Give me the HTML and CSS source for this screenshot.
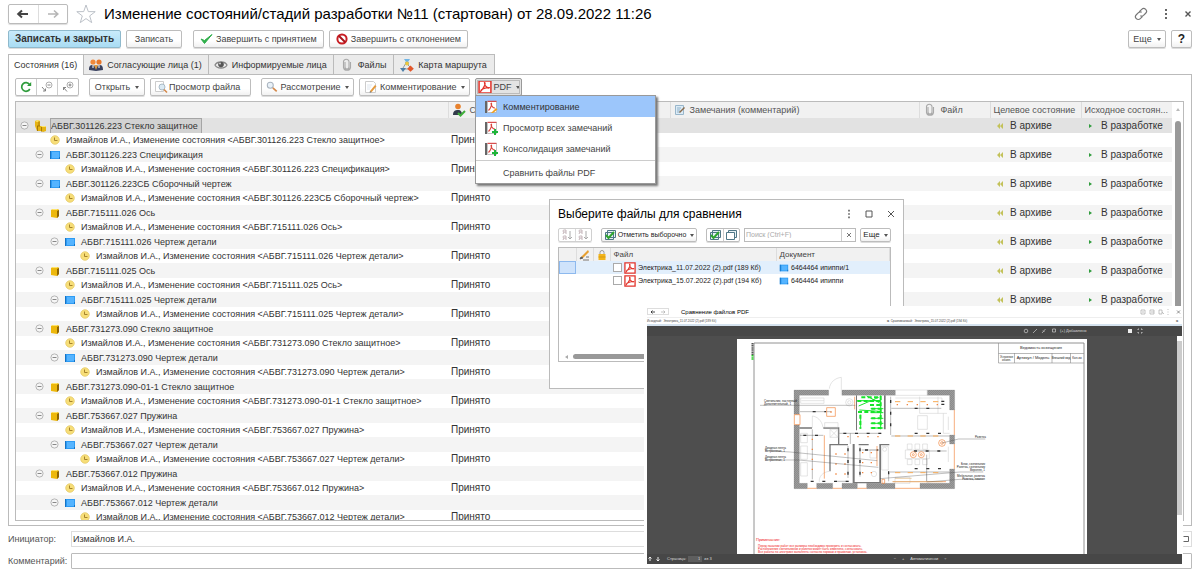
FILE: index.html
```html
<!DOCTYPE html>
<html lang="ru">
<head>
<meta charset="utf-8">
<title>Изменение состояний/стадий разработки №11</title>
<link rel="stylesheet" href="styles.css">
</head>
<body>
<svg class="defs" aria-hidden="true">
  <symbol id="minus" viewBox="0 0 9 9"><circle cx="4.500" cy="4.500" r="3.600" fill="#f6f6f6" stroke="#a6a6a6" stroke-width=".8"/><path d="M2.500 4.500h4" stroke="#888"/></symbol>
  <symbol id="asm" viewBox="0 0 12 12"><path d="M1 1l3-1 2 1v5h5l1 1v4l-3 1-2-1H3l-2-5z" fill="#e6b414"/><path d="M1 1l3-1 2 1-3 1zM7 6h4l1 1H8z" fill="#ffe76a"/><path d="M5 1.500V6M3 6h3M7.500 7v4.500M3.500 6v5" stroke="#9a6c00" stroke-width=".8"/></symbol>
  <symbol id="part" viewBox="0 0 12 12"><path d="M2 3l2-1h5l1 1v6l-2 2-6-1z" fill="#edb80c"/><path d="M2 3l2-1h5l-1 1z" fill="#ffe46a"/><path d="M8 4l2-1v6l-2 2z" fill="#8f6500"/></symbol>
  <symbol id="doc" viewBox="0 0 12 12"><path d="M1 2h10v8H1z" fill="#2e9bf3"/><path d="M3 3h7v6H3z" fill="#55b4ff"/><path d="M1 2h1v8H1zM10 8h1v2h-1z" fill="#1673c4"/></symbol>
  <symbol id="clock" viewBox="0 0 12 12"><circle cx="6" cy="6" r="4.300" fill="#f7de78" stroke="#e3c65e" stroke-width=".7"/><path d="M5.500 3.500v3h3" fill="none" stroke="#a5832c"/></symbol>
  <symbol id="back" viewBox="0 0 8 8"><path d="M4 1v6L1 4zM7 1v6L4 4z" fill="#c3c25a"/></symbol>
  <symbol id="fwd" viewBox="0 0 8 8"><path d="M2 2l3 2-3 2z" fill="#2f9c3c"/></symbol>
  <symbol id="clip" viewBox="0 0 14 14"><path d="M5 4v5a2 2 0 0 0 4 0V3.500a2.800 2.800 0 0 0-5.500 0V9.500a3.600 3.600 0 0 0 7 0V4" fill="none" stroke="#a9a9a9" stroke-width="1.100"/></symbol>
  <symbol id="note" viewBox="0 0 14 14"><path d="M1.500 1.500h8l2 2v9h-10z" fill="#fff" stroke="#ccc"/><path d="M3 5h5M3 7h4M3 9h3" stroke="#dfe6ee"/><path d="M6 11l5-6 1.500 1.200-5 6z" fill="#e59a3c"/><path d="M6 11l-.4 1.600 1.900-.4z" fill="#555"/></symbol>
  <symbol id="bluenote" viewBox="0 0 12 12"><path d="M1.500 1.500h8v9h-8z" fill="#dcebf6" stroke="#98b6cb"/><path d="M3 4h4M3 6h3M3 8h3" stroke="#8fb1c8"/><path d="M5 8l5-5 1 1-5 5z" fill="#8a6a4a"/></symbol>
  <symbol id="pdf" viewBox="0 0 13 13"><path d="M1 1h11v11H1z" fill="#fff" stroke="#e2352c" stroke-width="1.400"/><path d="M6 2.500c1.500 0 0 4-3.500 8 0-2 4-3.500 8-3.500 0 1.500-5-1-4.500-4.500z" fill="none" stroke="#e2352c" stroke-width="1.200"/></symbol>
  <symbol id="pdfpage" viewBox="0 0 14 14"><path d="M1 1h2v12H1z" fill="#666"/><path d="M3.500 1.500h9v11h-9z" fill="#fff" stroke="#aaa" stroke-width=".7"/><path d="M3.500 1.300h9" stroke="#d33"/><path d="M7 3c1.500 0 0 5-2.500 7.500M7 3c0 3 2 5 4 5" fill="none" stroke="#d9423a" stroke-width="1.100"/></symbol>
  <symbol id="checks" viewBox="0 0 12 12"><path d="M3.500 1.500h8v7h-8zM1.500 3.500h8v7h-8z" fill="#e8f2f6" stroke="#4f7787"/><path d="M2 6l2.500 3L10 3" fill="none" stroke="#2fa52f" stroke-width="2"/></symbol>
  <symbol id="sheets" viewBox="0 0 12 12"><path d="M3.500 1.500h8v7h-8z" fill="#e8f2f6" stroke="#4f7787"/><path d="M1.500 3.500h8v7h-8z" fill="#fff" stroke="#4f7787"/></symbol>
  <symbol id="lens" viewBox="0 0 14 14"><circle cx="5" cy="5" r="3.500" fill="#e9f1f8" stroke="#aab4bf" stroke-width="1.200"/><path d="M8 8l4.500 4" stroke="#d4884a" stroke-width="2"/></symbol>
  <symbol id="dots" viewBox="0 0 4 12"><path d="M1 1h2v2H1zM1 5h2v2H1zM1 9h2v2H1z" fill="#666"/></symbol>
  <symbol id="sort" viewBox="0 0 12 12"><path d="M9 2v8M7 8l2 2 2-2" fill="none" stroke="#888"/><path d="M5 1v4M5 1H3a1 1 0 0 0 0 2h2M3 3L2 5M5 7v4M5 7H3a1 1 0 0 0 0 2h2M3 9l-1 2" fill="none" stroke="#a58c94" stroke-width=".9"/></symbol>
</svg>

<header class="title-bar">
  <div class="nav">
    <button type="button" aria-label="Назад"><svg width="14" height="10" viewBox="0 0 14 10"><path d="M2 5h10M6 1.500L2.200 5 6 8.500" fill="none" stroke="#444" stroke-width="2"/></svg></button>
    <button type="button" aria-label="Вперед"><svg width="14" height="10" viewBox="0 0 14 10"><path d="M2 5h9M8 1.500L11.800 5 8 8.500" fill="none" stroke="#b5b5b5" stroke-width="1.600"/></svg></button>
  </div>
  <svg class="star" viewBox="0 0 20 20"><path d="M10 1l2.300 6.600 6.900.1-5.500 4.200 2 6.700-5.700-4-5.700 4 2-6.700L.8 7.700l6.900-.1z" fill="#fff" stroke="#b4bac2" stroke-width=".9"/></svg>
  <h1>Изменение состояний/стадий разработки №11 (стартован) от 28.09.2022 11:26</h1>
  <div class="win-tools">
    <svg width="14" height="14" viewBox="0 0 14 14"><g transform="rotate(-45 7 7)" fill="none" stroke="#777" stroke-width="1.200"><path d="M6.500 9.800H3.200a2.800 2.800 0 0 1 0-5.600h3a2.800 2.800 0 0 1 2.600 2M7.500 4.200h3.300a2.800 2.800 0 0 1 0 5.600h-3a2.800 2.800 0 0 1-2.600-2"/></g></svg>
    <svg width="4" height="12"><use href="#dots"/></svg>
    <svg width="8" height="8" viewBox="0 0 8 8"><path d="M1.500 1.500l5 5M6.500 1.500l-5 5" stroke="#555" stroke-width="1.400"/></svg>
  </div>
</header>

<div class="commands">
  <button type="button" class="btn primary">Записать и закрыть</button>
  <button type="button" class="btn save">Записать</button>
  <button type="button" class="btn"><svg width="13" height="12" viewBox="0 0 13 12"><path d="M1 6l3.500 4.500L12 1.500 4.500 7.500z" fill="#2fae4a" stroke="#2fae4a"/></svg>Завершить с принятием</button>
  <button type="button" class="btn"><svg width="12" height="12" viewBox="0 0 12 12"><circle cx="6" cy="6" r="4.600" fill="#fff" stroke="#c81e24" stroke-width="2"/><path d="M3 3l6 6" stroke="#a8141a" stroke-width="2"/></svg>Завершить с отклонением</button>
  <span class="grow"></span>
  <button type="button" class="btn more">Еще<i class="caret"></i></button>
  <button type="button" class="btn help">?</button>
</div>

<nav class="tabs">
  <button type="button" class="tab active">Состояния (16)</button>
  <button type="button" class="tab"><svg width="14" height="14" viewBox="0 0 14 14"><circle cx="4" cy="4" r="2.600" fill="#f0883a"/><circle cx="10" cy="4" r="2.600" fill="#e8772a"/><path d="M0 12c0-4 1-5 4-5l3 2 3-2c3 0 4 1 4 5l-7 1z" fill="#39405e"/><path d="M5 7l2 5 2-5z" fill="#d94"/><path d="M4 7v3M10 7v3" stroke="#fff"/></svg>Согласующие лица (1)</button>
  <button type="button" class="tab"><svg width="14" height="14" viewBox="0 0 14 14"><path d="M1 7c2-4 10-4 12 0-2 4-10 4-12 0z" fill="#eee" stroke="#888" stroke-width="1.300"/><circle cx="7" cy="6.500" r="2.800" fill="#555"/><circle cx="6" cy="5.500" r=".9" fill="#ddd"/></svg>Информируемые лица</button>
  <button type="button" class="tab roomy"><svg width="14" height="14"><use href="#clip"/></svg>Файлы</button>
  <button type="button" class="tab roomy"><svg width="14" height="14" viewBox="0 0 14 14"><path d="M6 5L3 10M7 6l4 4M4 11h6" stroke="#999" fill="none"/><path d="M4 1h6L8 4h1v3H5V4h1z" fill="#6fb5e6"/><circle cx="7" cy="5.500" r="1.900" fill="#f0c63c"/><path d="M0 10h6l-3 4z" fill="#4f7fa8"/><path d="M10.500 7.500l3.300 3.300-3.300 3-3.300-3z" fill="#e2572b"/></svg>Карта маршрута</button>
</nav>

<main class="panel">
  <div class="toolbar">
    <div class="group">
      <button type="button" aria-label="Обновить"><svg width="12" height="12" viewBox="0 0 12 12"><path d="M9.800 8A4.300 4.300 0 1 1 9.500 3.500" fill="none" stroke="#2f9c3c" stroke-width="1.700"/><path d="M11.200 1v4H7z" fill="#2f9c3c"/></svg></button>
      <button type="button" aria-label="Свернуть"><svg width="12" height="12" viewBox="0 0 12 12"><circle cx="8" cy="4" r="3" fill="none" stroke="#999" stroke-width=".8"/><path d="M6.500 4h3M1 6l3.500 4M4.500 7.500V10H2" fill="none" stroke="#777" stroke-width=".9"/></svg></button>
      <button type="button" aria-label="Развернуть"><svg width="12" height="12" viewBox="0 0 12 12"><circle cx="8" cy="4" r="3" fill="none" stroke="#999" stroke-width=".8"/><path d="M6.500 4h3M8 2.500v3M1.500 6.500L5 10.500M1.500 9V6.500H4" fill="none" stroke="#777" stroke-width=".9"/></svg></button>
    </div>
    <button type="button" class="btn open">Открыть<i class="caret"></i></button>
    <button type="button" class="btn view"><svg width="14" height="14" viewBox="0 0 14 14"><path d="M1.500 1.500h8v10h-8z" fill="#fff" stroke="#ccc"/><circle cx="8" cy="7" r="3" fill="#dbeaf4" stroke="#a9bac6"/><path d="M10 9.500l3 3" stroke="#d4884a" stroke-width="1.600"/></svg>Просмотр файла</button>
    <button type="button" class="btn review"><svg width="12" height="12"><use href="#lens"/></svg>Рассмотрение<i class="caret"></i></button>
    <button type="button" class="btn comment"><svg width="14" height="14"><use href="#note"/></svg>Комментирование<i class="caret"></i></button>
    <div class="drop">
      <button type="button" class="btn pressed"><svg width="14" height="14"><use href="#pdf"/></svg>PDF<i class="caret"></i></button>
      <div class="menu">
        <button type="button" class="item on"><svg width="14" height="14" viewBox="0 0 14 14"><use href="#pdfpage"/><path d="M7 13l5-5 1.500 1.500L9 13z" fill="#f0a020"/></svg>Комментирование</button>
        <button type="button" class="item"><svg width="14" height="14" viewBox="0 0 14 14"><use href="#pdfpage"/><path d="M11 8v6M8 11h6" stroke="#1eb53a" stroke-width="2"/></svg>Просмотр всех замечаний</button>
        <button type="button" class="item"><svg width="14" height="14" viewBox="0 0 14 14"><use href="#pdfpage"/><path d="M11 8v6M8 11h6" stroke="#1eb53a" stroke-width="2"/></svg>Консолидация замечаний</button>
        <hr>
        <button type="button" class="item bare">Сравнить файлы PDF</button>
      </div>
    </div>
  </div>

  <div class="grid-box">
    <div class="grid-scroll">
      <table class="grid">
        <colgroup><col class="c-name"><col class="c-state"><col><col class="c-file"><col class="c-goal"><col class="c-from"></colgroup>
        <thead><tr>
          <th></th>
          <th><span class="head"><svg width="14" height="14" viewBox="0 0 14 14"><circle cx="6" cy="3.500" r="2.800" fill="#e8822e"/><path d="M1 12c0-4 2-5 5-5s4 2 4 5z" fill="#333c4c"/><path d="M6 10l2.500 2.500L13 8" fill="none" stroke="#3fae3a" stroke-width="2"/></svg>Состояние</span></th>
          <th><span class="head"><svg width="12" height="12"><use href="#bluenote"/></svg>Замечания (комментарий)</span></th>
          <th><span class="head"><svg width="14" height="14"><use href="#clip"/></svg>Файл</span></th>
          <th>Целевое состояние</th>
          <th>Исходное состоян...</th>
        </tr></thead>
        <tbody>
          <tr class="g sel"><td><div class="node"><button type="button" aria-label="Свернуть"><svg><use href="#minus"/></svg></button><svg><use href="#asm"/></svg><span class="cur">АБВГ.301126.223 Стекло защитное</span></div></td><td></td><td></td><td></td><td><span class="st"><svg><use href="#back"/></svg>В архиве</span></td><td><span class="st"><svg><use href="#fwd"/></svg>В разработке</span></td></tr>
          <tr><td><div class="node d1 leaf"><svg><use href="#clock"/></svg><span>Измайлов И.А., Изменение состояния &lt;АБВГ.301126.223 Стекло защитное&gt;</span></div></td><td>Принято</td><td></td><td></td><td></td><td></td></tr>
          <tr class="g"><td><div class="node d1"><button type="button" aria-label="Свернуть"><svg><use href="#minus"/></svg></button><svg><use href="#doc"/></svg><span>АБВГ.301126.223 Спецификация</span></div></td><td></td><td></td><td></td><td><span class="st"><svg><use href="#back"/></svg>В архиве</span></td><td><span class="st"><svg><use href="#fwd"/></svg>В разработке</span></td></tr>
          <tr><td><div class="node d2 leaf"><svg><use href="#clock"/></svg><span>Измайлов И.А., Изменение состояния &lt;АБВГ.301126.223 Спецификация&gt;</span></div></td><td>Принято</td><td></td><td></td><td></td><td></td></tr>
          <tr class="g"><td><div class="node d1"><button type="button" aria-label="Свернуть"><svg><use href="#minus"/></svg></button><svg><use href="#doc"/></svg><span>АБВГ.301126.223СБ Сборочный чертеж</span></div></td><td></td><td></td><td></td><td><span class="st"><svg><use href="#back"/></svg>В архиве</span></td><td><span class="st"><svg><use href="#fwd"/></svg>В разработке</span></td></tr>
          <tr><td><div class="node d2 leaf"><svg><use href="#clock"/></svg><span>Измайлов И.А., Изменение состояния &lt;АБВГ.301126.223СБ Сборочный чертеж&gt;</span></div></td><td>Принято</td><td></td><td></td><td></td><td></td></tr>
          <tr class="g"><td><div class="node d1"><button type="button" aria-label="Свернуть"><svg><use href="#minus"/></svg></button><svg><use href="#part"/></svg><span>АБВГ.715111.026 Ось</span></div></td><td></td><td></td><td></td><td><span class="st"><svg><use href="#back"/></svg>В архиве</span></td><td><span class="st"><svg><use href="#fwd"/></svg>В разработке</span></td></tr>
          <tr><td><div class="node d2 leaf"><svg><use href="#clock"/></svg><span>Измайлов И.А., Изменение состояния &lt;АБВГ.715111.026 Ось&gt;</span></div></td><td>Принято</td><td></td><td></td><td></td><td></td></tr>
          <tr class="g"><td><div class="node d2"><button type="button" aria-label="Свернуть"><svg><use href="#minus"/></svg></button><svg><use href="#doc"/></svg><span>АБВГ.715111.026 Чертеж детали</span></div></td><td></td><td></td><td></td><td><span class="st"><svg><use href="#back"/></svg>В архиве</span></td><td><span class="st"><svg><use href="#fwd"/></svg>В разработке</span></td></tr>
          <tr><td><div class="node d3 leaf"><svg><use href="#clock"/></svg><span>Измайлов И.А., Изменение состояния &lt;АБВГ.715111.026 Чертеж детали&gt;</span></div></td><td>Принято</td><td></td><td></td><td></td><td></td></tr>
          <tr class="g"><td><div class="node d1"><button type="button" aria-label="Свернуть"><svg><use href="#minus"/></svg></button><svg><use href="#part"/></svg><span>АБВГ.715111.025 Ось</span></div></td><td></td><td></td><td></td><td><span class="st"><svg><use href="#back"/></svg>В архиве</span></td><td><span class="st"><svg><use href="#fwd"/></svg>В разработке</span></td></tr>
          <tr><td><div class="node d2 leaf"><svg><use href="#clock"/></svg><span>Измайлов И.А., Изменение состояния &lt;АБВГ.715111.025 Ось&gt;</span></div></td><td>Принято</td><td></td><td></td><td></td><td></td></tr>
          <tr class="g"><td><div class="node d2"><button type="button" aria-label="Свернуть"><svg><use href="#minus"/></svg></button><svg><use href="#doc"/></svg><span>АБВГ.715111.025 Чертеж детали</span></div></td><td></td><td></td><td></td><td><span class="st"><svg><use href="#back"/></svg>В архиве</span></td><td><span class="st"><svg><use href="#fwd"/></svg>В разработке</span></td></tr>
          <tr><td><div class="node d3 leaf"><svg><use href="#clock"/></svg><span>Измайлов И.А., Изменение состояния &lt;АБВГ.715111.025 Чертеж детали&gt;</span></div></td><td>Принято</td><td></td><td></td><td></td><td></td></tr>
          <tr class="g"><td><div class="node d1"><button type="button" aria-label="Свернуть"><svg><use href="#minus"/></svg></button><svg><use href="#part"/></svg><span>АБВГ.731273.090 Стекло защитное</span></div></td><td></td><td></td><td></td><td></td><td></td></tr>
          <tr><td><div class="node d2 leaf"><svg><use href="#clock"/></svg><span>Измайлов И.А., Изменение состояния &lt;АБВГ.731273.090 Стекло защитное&gt;</span></div></td><td>Принято</td><td></td><td></td><td></td><td></td></tr>
          <tr class="g"><td><div class="node d2"><button type="button" aria-label="Свернуть"><svg><use href="#minus"/></svg></button><svg><use href="#doc"/></svg><span>АБВГ.731273.090 Чертеж детали</span></div></td><td></td><td></td><td></td><td></td><td></td></tr>
          <tr><td><div class="node d3 leaf"><svg><use href="#clock"/></svg><span>Измайлов И.А., Изменение состояния &lt;АБВГ.731273.090 Чертеж детали&gt;</span></div></td><td>Принято</td><td></td><td></td><td></td><td></td></tr>
          <tr class="g"><td><div class="node d1"><button type="button" aria-label="Свернуть"><svg><use href="#minus"/></svg></button><svg><use href="#part"/></svg><span>АБВГ.731273.090-01-1 Стекло защитное</span></div></td><td></td><td></td><td></td><td></td><td></td></tr>
          <tr><td><div class="node d2 leaf"><svg><use href="#clock"/></svg><span>Измайлов И.А., Изменение состояния &lt;АБВГ.731273.090-01-1 Стекло защитное&gt;</span></div></td><td>Принято</td><td></td><td></td><td></td><td></td></tr>
          <tr class="g"><td><div class="node d1"><button type="button" aria-label="Свернуть"><svg><use href="#minus"/></svg></button><svg><use href="#part"/></svg><span>АБВГ.753667.027 Пружина</span></div></td><td></td><td></td><td></td><td></td><td></td></tr>
          <tr><td><div class="node d2 leaf"><svg><use href="#clock"/></svg><span>Измайлов И.А., Изменение состояния &lt;АБВГ.753667.027 Пружина&gt;</span></div></td><td>Принято</td><td></td><td></td><td></td><td></td></tr>
          <tr class="g"><td><div class="node d2"><button type="button" aria-label="Свернуть"><svg><use href="#minus"/></svg></button><svg><use href="#doc"/></svg><span>АБВГ.753667.027 Чертеж детали</span></div></td><td></td><td></td><td></td><td></td><td></td></tr>
          <tr><td><div class="node d3 leaf"><svg><use href="#clock"/></svg><span>Измайлов И.А., Изменение состояния &lt;АБВГ.753667.027 Чертеж детали&gt;</span></div></td><td>Принято</td><td></td><td></td><td></td><td></td></tr>
          <tr class="g"><td><div class="node d1"><button type="button" aria-label="Свернуть"><svg><use href="#minus"/></svg></button><svg><use href="#part"/></svg><span>АБВГ.753667.012 Пружина</span></div></td><td></td><td></td><td></td><td></td><td></td></tr>
          <tr><td><div class="node d2 leaf"><svg><use href="#clock"/></svg><span>Измайлов И.А., Изменение состояния &lt;АБВГ.753667.012 Пружина&gt;</span></div></td><td>Принято</td><td></td><td></td><td></td><td></td></tr>
          <tr class="g"><td><div class="node d2"><button type="button" aria-label="Свернуть"><svg><use href="#minus"/></svg></button><svg><use href="#doc"/></svg><span>АБВГ.753667.012 Чертеж детали</span></div></td><td></td><td></td><td></td><td></td><td></td></tr>
          <tr><td><div class="node d3 leaf"><svg><use href="#clock"/></svg><span>Измайлов И.А., Изменение состояния &lt;АБВГ.753667.012 Чертеж детали&gt;</span></div></td><td>Принято</td><td></td><td></td><td></td><td></td></tr>
        </tbody>
      </table>
    </div>
    <div class="vbar"><i class="up"></i><span class="thumb"></span></div>
  </div>
</main>

<form class="fields">
  <label for="initiator">Инициатор:</label>
  <div class="picker"><input id="initiator" type="text" value="Измайлов И.А."><svg width="8" height="8" viewBox="0 0 8 8"><path d="M.5 1.500h5v5h-5" fill="none" stroke="#666"/></svg></div>
  <label for="comment">Комментарий:</label>
  <input id="comment" type="text">
</form>

<section class="dialog">
  <header class="dlg-title">
    <h2>Выберите файлы для сравнения</h2>
    <svg width="4" height="10" viewBox="0 0 4 12"><use href="#dots"/></svg>
    <svg width="8" height="8" viewBox="0 0 8 8"><path d="M1 1h6v6H1z" fill="none" stroke="#555"/></svg>
    <svg width="8" height="8" viewBox="0 0 8 8"><path d="M1 1l6 6M7 1L1 7" stroke="#555"/></svg>
  </header>
  <div class="dlg-tools">
    <div class="group small faint"><button type="button" aria-label="По возрастанию"><svg width="12" height="12"><use href="#sort"/></svg></button><button type="button" aria-label="По убыванию"><svg width="12" height="12"><use href="#sort"/></svg></button></div>
    <button type="button" class="btn mark"><svg width="12" height="12"><use href="#checks"/></svg>Отметить выборочно<i class="caret"></i></button>
    <div class="group small"><button type="button" aria-label="Отметить все"><svg width="12" height="12"><use href="#checks"/></svg></button><button type="button" aria-label="Снять отметки"><svg width="12" height="12"><use href="#sheets"/></svg></button></div>
    <div class="search"><input type="text" placeholder="Поиск (Ctrl+F)" aria-label="Поиск"><button type="button" aria-label="Очистить"><svg width="6" height="6" viewBox="0 0 6 6"><path d="M1 1l4 4M5 1L1 5" stroke="#777"/></svg></button></div>
    <button type="button" class="btn dlg-more">Еще<i class="caret"></i></button>
  </div>
  <div class="dlg-list">
    <table class="files">
      <colgroup><col class="f-cell"><col class="f-icon"><col class="f-icon"><col class="f-name"><col></colgroup>
      <thead><tr>
        <th></th>
        <th><svg width="12" height="12" viewBox="0 0 12 12"><path d="M2 8L9 1l1 2-6 6z" fill="#e8a030"/><path d="M2 8l2 1-3 1zM4 11h6M7 8h3" stroke="#555" fill="#555" stroke-width=".8"/></svg></th>
        <th><svg width="12" height="12" viewBox="0 0 12 12"><path d="M4 5V3.500a2 2 0 0 1 4 0V5" fill="none" stroke="#999"/><path d="M2.500 5h7v6h-7z" fill="#f2b41c"/><path d="M2.500 8h7" stroke="#d79a0c"/></svg></th>
        <th>Файл</th><th>Документ</th>
      </tr></thead>
      <tbody>
        <tr class="cur-row"><td class="cell-on"></td><td></td><td></td><td><label class="file"><input type="checkbox"><svg width="12" height="12"><use href="#pdf"/></svg>Электрика_11.07.2022 (2).pdf (189 Кб)</label></td><td><span class="file"><svg width="10" height="10"><use href="#doc"/></svg>6464464 ипиппи/1</span></td></tr>
        <tr><td></td><td></td><td></td><td><label class="file"><input type="checkbox"><svg width="12" height="12"><use href="#pdf"/></svg>Электрика_15.07.2022 (2).pdf (194 Кб)</label></td><td><span class="file"><svg width="10" height="10"><use href="#doc"/></svg>6464464 ипиппи</span></td></tr>
      </tbody>
    </table>
    <div class="hbar"><i class="left"></i><span class="thumb"></span></div>
  </div>
</section>

<section class="compare">
  <header class="cmp-title">
    <div class="mini-nav"><button type="button" aria-label="Назад"><svg width="6" height="4" viewBox="0 0 6 4"><path d="M1 2h4M2.500.5L1 2l1.500 1.500" fill="none" stroke="#333" stroke-width=".9"/></svg></button><button type="button" aria-label="Вперед"><svg width="6" height="4" viewBox="0 0 6 4"><path d="M1 2h4M3.500.5L5 2 3.500 3.500" fill="none" stroke="#aaa" stroke-width=".7"/></svg></button></div>
    <h3>Сравнение файлов PDF</h3>
    <svg width="42" height="6" viewBox="0 0 42 6" fill="none" stroke="#aaa" stroke-width=".7"><path d="M1 1h4v4H1zM2 3h2M10 1h4v4h-4zM11 3h3M19 1h3v4h-3zM22 3l2 2M28 0v1M28 2.500v1M28 5v1"/><path d="M37 1.500l3 3M40 1.500l-3 3" stroke="#666"/></svg>
  </header>
  <div class="cmp-names">
    <span>Исходный:&nbsp; Электрика_11.07.2022 (2).pdf (189 Кб)</span>
    <span>⧉&nbsp; Сравниваемый:&nbsp; Электрика_15.07.2022 (2).pdf (194 Кб)</span>
    <b>⧉</b>
  </div>
  <div class="cmp-tools">
    <svg width="36" height="6" viewBox="0 0 36 6" fill="none" stroke="#ccc" stroke-width=".7"><circle cx="4" cy="3" r="1.800"/><path d="M11 5l4-4M20 5l3.500-4M21 2.500l1.500 1.500M30.500 1h3v3h-3z"/></svg>
    <span class="added">(+) Добавлено</span>
    <svg width="20" height="6" viewBox="0 0 20 6"><path d="M2 1h4v4H2z" fill="#eee"/><path d="M12 2V1h1M15 1h1v1M16 4v1h-1M13 5h-1V4" fill="none" stroke="#ddd" stroke-width=".8"/></svg>
  </div>
  <div class="cmp-view">
    <svg class="sheet" viewBox="737 339 350 215" font-family="Liberation Sans, sans-serif">
      <defs><pattern id="hatch" width="6" height="6" patternUnits="userSpaceOnUse"><path d="M0 0h6v6H0z" fill="#9c9c9c"/><path d="M0 6l6-6" stroke="#7c7c7c" stroke-width="1.500"/></pattern></defs>
      <path d="M737 339h350v215H737z" fill="#fff"/>
      <path d="M754 554V343h330v211" fill="none" stroke="#777" stroke-width=".8"/>
      <path d="M752.500 343v12" stroke="#555" stroke-width="2" stroke-dasharray="1.500 .6"/><path d="M752.500 355v5" stroke="#2c2" stroke-width="2" stroke-dasharray="1 .4"/>
      <path d="M998.500 343v20h85.500M998.500 353.500H1084M1014.500 353v10M1052 353v10M1070.500 353v10" fill="none" stroke="#888" stroke-width=".6"/>
      <g font-size="3" fill="#222" text-anchor="middle"><text x="1041" y="349" font-size="4">Ведомость освещения</text><text x="1006.500" y="358">Условное</text><text x="1006.500" y="361">обозн.</text><text x="1033" y="359" font-size="4">Артикул / Модель</text><text x="1061" y="359">Внешний вид</text><text x="1077" y="359">Кол-во</text></g>
      <g transform="translate(780 370) scale(.3333)">
        <g fill="url(#hatch)" stroke="#777" stroke-width=".6">
          <path d="M42 60h104v16H58v57H42zM186 60h160v16H186zM442 60h82v60h-15V76h-67zM42 165h16v175h24v16H42zM110 340h48v16h-48zM186 340h46v16h-46zM260 340h85v16h-85zM420 340h89v-43h15v59H420zM509 195h15v27h-15z"/>
        </g>
        <g fill="#777">
          <path d="M228 76h3v105h-3zM312 76h5v102h-5zM58 172h38v4H58zM130 172h48v50h-4v-46h-44zM148 222h56v4h-52v78h-4zM218 222h6v114h74V222h5v118h-85zM236 222h30v4h-30zM303 222h25v4h-25z"/>
        </g>
        <g fill="none" stroke="#c8c8c8" stroke-width="1.500">
          <path d="M148 56c2-20 18-32 36-34v54M97 174v-36c14 2 28 12 32 34M346 60h96v16h-96M62 84h70v16H62zM64 92h68M134 158h40v14h-40zM150 178h24v24h-24zM150 178l24 24M174 178l-24 24M413 137h29v41h-29zM419 80v50h82M474 80v50M490 130v60h19M346 84h140v14M62 190h20v28H62zM62 228h20v40H62zM62 278h20v40H62zM382 222h14v16h-14zM405 222h14v16h-14zM428 222h14v16h-14zM382 268h14v16h-14zM405 268h14v16h-14zM428 268h14v16h-14zM376 240h72v26h-72zM305 230h20v70h-20zM345 322h45v18h-45zM505 140v40M505 230v46M270 240h20v24h-20zM118 336c-2-16 10-30 30-32M440 306v30"/>
          <circle cx="208" cy="97" r="11"/><circle cx="208" cy="97" r="5"/><circle cx="314" cy="238" r="6"/><circle cx="282" cy="312" r="8"/>
        </g>
        <g fill="none" stroke="#333" stroke-width="1">
          <path d="M60 125h94M332 80v115M334 115h150M334 198h175M178 190h125M211 190v32M60 196h70M97 178v150M240 230v90M204 228v96M165 334h40M245 240h50M400 243h100M330 306h178M326 304v30M440 254v80"/>
          <path stroke-width="4" stroke-dasharray="9 26" d="M98 125h40M332 90v100M404 115h60M404 190h100M190 190h115M70 196h60M240 235v85M204 235v85M92 334h120M255 240h40M402 243h100M404 296h100M484 94h28M484 103h28M326 304v30"/>
        </g>
        <g fill="none" stroke="#16e52a" stroke-width="3">
          <path d="M232 92h68M238 120l60 4M236 108l60-26M242 134v42M302 76v102M272 116h38M272 128h38M272 145h38M272 160h38M272 174h38M260 78l38 20"/>
          <path stroke-width="6" stroke-dasharray="12 7" d="M244 82h54M232 93h70M234 126h66M274 116h36M274 145h36M274 160h36M274 174h36M302 78v98M241 134v42M270 105h30"/>
        </g>
        <g fill="none" stroke="#f2853c" stroke-width="2">
          <path d="M140 113h26v26h-26zM43 134h17v30H43zM523 120v75M523 222v75M82 355h28M158 355h28M232 355h28M345 355h75M224 80v38M291 228v60M133 196v130M338 335h160M306 328h8v12h-8z"/>
          <path stroke="#f8ab55" stroke-width="3" stroke-dasharray="16 22" d="M345 95h140M345 198h140M345 308h140"/>
          <path stroke-width="4" stroke-dasharray="4 26" d="M97 206v120M168 250v84M195 250v84M248 246v76M274 246v76M350 104h130M202 200h100M151 126h4"/>
          <circle cx="486" cy="219" r="10"/><circle cx="486" cy="219" r="4"/><circle cx="400" cy="254" r="9"/><circle cx="424" cy="254" r="9"/><circle cx="400" cy="254" r="3"/><circle cx="424" cy="254" r="3"/>
        </g>
        <path d="M345 325h50M338 335h150" stroke="#dcb37a" stroke-width="2"/>
        <path d="M-60 106h286M-45 242L30 246l262 26M-45 270h100l240 22M486 219l50-12h80M300 326l240-20h70M440 336l100-8h70" fill="none" stroke="#444" stroke-width="1"/>
      </g>
      <g font-size="3" fill="#222">
        <text x="764" y="402">Светильник, настенный</text><text x="764" y="405">Дополнительный, 1</text>
        <text x="765" y="449">Диодная лента</text><text x="765" y="452">Встроенная, 1</text><text x="765" y="458">Диодная лента</text><text x="765" y="461">Встроенная, 1</text>
        <text x="975" y="438">Розетка</text>
        <g text-anchor="end"><text x="985" y="465">Блок, светильник</text><text x="985" y="468">Розетка, светильник</text><text x="985" y="471">Верхняя, 1</text><text x="985" y="477">Мебельная, розетка</text><text x="985" y="480">Розетка, нижняя</text></g>
      </g>
      <g fill="#f02020" font-size="3"><text x="756" y="541" font-size="4">Примечание:</text><text x="758" y="547">Перед началом работ все размеры необходимо проверить и согласовать.</text><text x="758" y="550">Расположение светильников и розеток может быть изменено, согласовать.</text><text x="758" y="553">Все работы по электрике выполнять согласно нормам и правилам, установка.</text></g>
    </svg>
    <div class="cmp-bar"><span></span></div>
  </div>
  <footer class="cmp-foot">
    <svg width="14" height="6" viewBox="0 0 14 6"><path d="M3 5V1.500M1.500 2.500L3 1l1.500 1.500M11 1v3.500M9.500 3.500L11 5l1.500-1.500" fill="none" stroke="#eee"/></svg>
    <label for="page">Страница:</label><input id="page" type="text" value="1"><span>из 3</span>
    <div class="zoom"><span>−</span><span>+</span><span>Автоматически</span><span>÷</span></div>
  </footer>
</section>
</body>
</html>
```
FILE: styles.css
```css
* { box-sizing: border-box; }

body {
  margin: 0;
  height: 100vh;
  padding: 4px 8px 6px;
  display: flex;
  flex-direction: column;
  position: relative;
  overflow: hidden;
  background: #fff;
  color: #444;
  font: 9px/14px "Liberation Sans", Arial, sans-serif;
}

h1, h2, h3 { margin: 0; font-weight: normal; color: #000; white-space: nowrap; }
button, input { font: inherit; color: inherit; margin: 0; }
button { padding: 0; background: none; border: 0; white-space: nowrap; }
svg { flex: none; display: block; }
.defs { position: absolute; width: 0; height: 0; }
.grow { flex: 1; }

/* Title */
.title-bar { display: flex; align-items: center; height: 20px; }
.nav {
  display: flex;
  width: 60px;
  height: 20px;
  border: 1px solid #bbb;
  border-radius: 2px;
  box-shadow: 0 1px 1px #ddd;
}
.nav button { flex: 1; display: flex; align-items: center; justify-content: center; }
.nav button + button { border-left: 1px solid #ddd; }
.star { width: 20px; height: 20px; margin: 0 8px 0 8px; }
h1 { font-size: 15px; line-height: 20px; }
.win-tools { margin-left: auto; display: flex; align-items: center; gap: 16px; }

/* Buttons */
.btn {
  display: flex;
  align-items: center;
  justify-content: center;
  gap: 3px;
  height: 18px;
  padding: 0 6px;
  border: 1px solid #bdbdbd;
  border-radius: 2px;
  background: linear-gradient(#fff 60%, #f1f1f1);
  box-shadow: 0 1px 0 #ddd;
  color: #444;
}
.caret {
  margin-left: 2px;
  border: 2px solid transparent;
  border-top: 3px solid #555;
  border-bottom: 0;
}
.commands { display: flex; gap: 5px; margin-top: 6px; }
.commands .btn:nth-child(2) { margin-right: 6px; }
.primary { width: 113px; background: linear-gradient(#c9ebfb, #a9dcf3); border-color: #8fb9cc; color: #333; font-size: 10px; font-weight: bold; }
.save { width: 56px; }
.more { width: 38px; }
.help { width: 21px; color: #222; font-size: 12px; font-weight: bold; }

/* Tabs */
.tabs { display: flex; height: 21px; margin-top: 6px; position: relative; }
.tab {
  display: flex;
  align-items: center;
  gap: 4px;
  padding: 0 6px 0 5px;
  height: 20px;
  background: #ebebeb;
  border: 1px solid #bbb;
  border-left-width: 0;
  border-bottom: 0;
  color: #333;
}
.tab.active { height: 21px; background: #fff; border-left-width: 1px; z-index: 1; }
.tab.roomy { padding: 0 7px 0 6px; }

.panel {
  flex: 1;
  min-height: 0;
  display: flex;
  flex-direction: column;
  margin-top: -1px;
  padding: 3px 7px 4px 6px;
  border: 1px solid #bbb;
}
.toolbar { display: flex; height: 18px; gap: 5px; }
.group {
  display: flex;
  flex: none;
  width: 64px;
  height: 18px;
  border: 1px solid #bdbdbd;
  border-radius: 2px;
  box-shadow: 0 1px 0 #ddd;
  margin-right: 5px;
}
.group button { flex: 1; display: flex; align-items: center; justify-content: center; }
.group button + button { border-left: 1px solid #ccc; }
.open { width: 56px; }
.view { width: 101px; margin-right: 5px; padding: 0 3px; gap: 1px; justify-content: flex-start; }
.review { width: 93px; }
.comment { width: 111px; padding: 0 4px; gap: 2px; justify-content: flex-start; }
.comment .caret { margin-left: auto; }

/* Drop-down menu */
.drop { position: relative; }
.pressed { width: 47px; background: #e3e3e3; border: 1px solid #999; padding: 0 2px; gap: 2px; outline: 1px solid #bbb; outline-offset: -3px; }
.menu {
  position: absolute;
  z-index: 5;
  top: 17px;
  left: 0;
  width: 181px;
  background: #fff;
  border: 1px solid #999;
  box-shadow: 2px 2px 2px #777;
}
.item { display: flex; align-items: center; gap: 5px; width: 100%; height: 21px; padding-left: 8px; color: #444; }
.item.on { background: #9cc6fb; color: #333; }
.item.bare { padding-left: 27px; }
.menu hr { margin: 1px 0; border: 0; border-top: 1px solid #ccc; }

/* Tree table */
.grid-box { flex: 1; min-height: 0; display: flex; margin-top: 5px; border: 1px solid #bbb; }
.grid-scroll { flex: 1; min-width: 0; overflow: hidden; }
.grid { width: 100%; table-layout: fixed; border-collapse: collapse; color: #333; }
.grid th, .grid td { padding: 0 0 0 3px; overflow: hidden; white-space: nowrap; text-align: left; font-weight: normal; }
.grid th { height: 16px; background: #f1f1f1; color: #555; border-right: 1px solid #ddd; }
.grid th:last-child { border-right: 0; }
.grid td { font-size: 10px; }
.grid td:first-child { padding: 0; font-size: 9px; }
.grid tr { height: 14px; }
.grid tr.g { height: 15px; background: #f4f4f4; }
.grid tr.sel { background: #e2e2e2; }
.c-name { width: 432px; }
.c-state { width: 222px; }
.c-file { width: 71px; }
.c-goal { width: 91px; }
.c-from { width: 91px; }
.head { display: flex; align-items: center; gap: 4px; }
.node { display: flex; align-items: center; height: 14px; padding-left: 4px; gap: 5px; }
.node > svg { width: 12px; height: 12px; }
.node button, .node button svg { width: 9px; height: 9px; }
.node.leaf { padding-left: 18px; }
.d1 { padding-left: 19px; }
.d2 { padding-left: 34px; }
.d3 { padding-left: 49px; }
.d1.leaf { padding-left: 33px; }
.d2.leaf { padding-left: 48px; }
.d3.leaf { padding-left: 63px; }
.cur { background: #d2d2d2; outline: 1px solid #a5a5a5; padding-right: 3px; }
.st { display: flex; align-items: center; gap: 6px; padding-left: 3px; }
.st svg { width: 8px; height: 8px; }
.vbar { width: 11px; display: flex; flex-direction: column; align-items: center; }
.up { margin: 6px 0; border: 2px solid transparent; border-bottom: 3px solid #bbb; border-top: 0; }
.vbar .thumb { width: 6px; flex: 1; margin: 4px 0 60px; border-radius: 3px; background: #999; }

/* Bottom fields */
.fields { display: grid; grid-template-columns: 63px 1fr; gap: 6px 0; margin-top: 5px; align-items: center; color: #555; }
.fields input { width: 100%; height: 16px; padding: 0 2px; border: 1px solid #bbb; border-radius: 1px; background: #fff; color: #333; }
.picker { display: flex; align-items: center; border: 1px solid #ddd; height: 16px; }
.picker input { flex: 1; height: 14px; border: 0; padding: 0 1px; }

/* File selection window */
.dialog {
  position: absolute;
  left: 549px;
  top: 199px;
  width: 355px;
  height: 190px;
  display: flex;
  flex-direction: column;
  padding: 5px 8px 26px;
  background: #fff;
  border: 1px solid #bbb;
  font-size: 7px;
}
.dlg-title { display: flex; align-items: center; gap: 14px; height: 18px; }
.dlg-title h2 { flex: 1; font-size: 12px; line-height: 18px; }
.dlg-tools { display: flex; align-items: center; gap: 4px; margin: 5px 4px 0 0; }
.dlg-tools .btn { flex: none; height: 14px; padding: 0 2px; gap: 2px; color: #222; }
.group.small { width: 34px; height: 14px; }
.faint { opacity: .7; }
.dlg-tools .mark { width: 96px; margin-right: 5px; }
.dlg-tools .dlg-more { width: 31px; font-size: 8px; }
.dlg-tools .group { margin-right: 0; }
.dlg-tools .faint { margin-right: 5px; }
.search { flex: 1; min-width: 0; display: flex; height: 14px; border: 1px solid #bbb; }
.search input { flex: 1; min-width: 0; border: 0; padding: 0 1px; }
.search input::placeholder { color: #aaa; }
.search button { width: 14px; display: flex; align-items: center; justify-content: center; border-left: 1px solid #ccc; }
.dlg-list { flex: 1; display: flex; flex-direction: column; margin: 5px 4px 0 0; border: 1px solid #bbb; color: #222; }
.files { width: 100%; table-layout: fixed; border-collapse: collapse; }
.files th, .files td { height: 13px; padding: 0; text-align: left; font-weight: normal; white-space: nowrap; line-height: 12px; }
.files th { background: #f1f1f1; color: #444; border-right: 1px solid #ddd; font-size: 8px; }
.files th:nth-child(4), .files th:nth-child(5) { padding-left: 3px; }
.files th svg { margin: auto; }
.f-cell, .f-icon { width: 17px; }
.f-name { width: 166px; }
.cur-row { background: #e2effc; }
.cell-on { background: #cfe3fb; outline: 1px solid #8db9ee; outline-offset: -1px; }
.file { display: flex; align-items: center; gap: 2px; padding-left: 3px; height: 13px; }
.file input { appearance: none; flex: none; width: 9px; height: 9px; border: 1px solid #aaa; background: #fff; }
.hbar { display: flex; align-items: center; gap: 5px; margin-top: auto; height: 9px; padding-left: 6px; }
.left { border: 2px solid transparent; border-right: 3px solid #aaa; border-left: 0; }
.hbar .thumb { flex: 1; height: 5px; border-radius: 3px; background: #999; }

/* PDF comparison window */
.compare {
  position: absolute;
  left: 644px;
  top: 306px;
  width: 539px;
  height: 259px;
  display: flex;
  flex-direction: column;
  padding: 0 1px 1px 3px;
  background: #fff;
  font-size: 4px;
  line-height: 6px;
}
.cmp-title { display: flex; align-items: center; height: 11px; }
.mini-nav { display: flex; width: 22px; height: 7px; border: 1px solid #ddd; margin-right: 12px; }
.mini-nav button { flex: 1; display: flex; align-items: center; justify-content: center; }
h3 { flex: 1; font-size: 6px; }
.cmp-names { display: grid; grid-template-columns: 240px 1fr 6px; height: 9px; align-items: center; border-top: 1px solid #eee; border-bottom: 2px solid #d5e3ef; font-size: 3px; }
.cmp-names b { font-weight: normal; }
.cmp-tools { display: flex; align-items: center; gap: 2px; height: 10px; padding-right: 36px; justify-content: flex-end; background: #474747; color: #ddd; }
.added { width: 64px; }
.cmp-view { flex: 1; min-height: 0; display: flex; background: #4e4e4e; padding-left: 90px; }
.sheet { width: 350px; height: 215px; margin-top: 3px; }
.cmp-bar { width: 5px; margin-left: auto; background: #fff; }
.cmp-bar span { display: block; height: 80%; margin-top: 5px; background: #ccc; }
.cmp-foot { display: flex; align-items: center; gap: 2px; height: 10px; background: #474747; color: #ddd; }
.cmp-foot label { margin-left: 4px; }
.cmp-foot input { width: 14px; height: 6px; padding: 0 2px; border: 0; background: #5e5e5e; text-align: right; }
.zoom { display: flex; gap: 6px; margin: 0 auto 0 180px; }
```
